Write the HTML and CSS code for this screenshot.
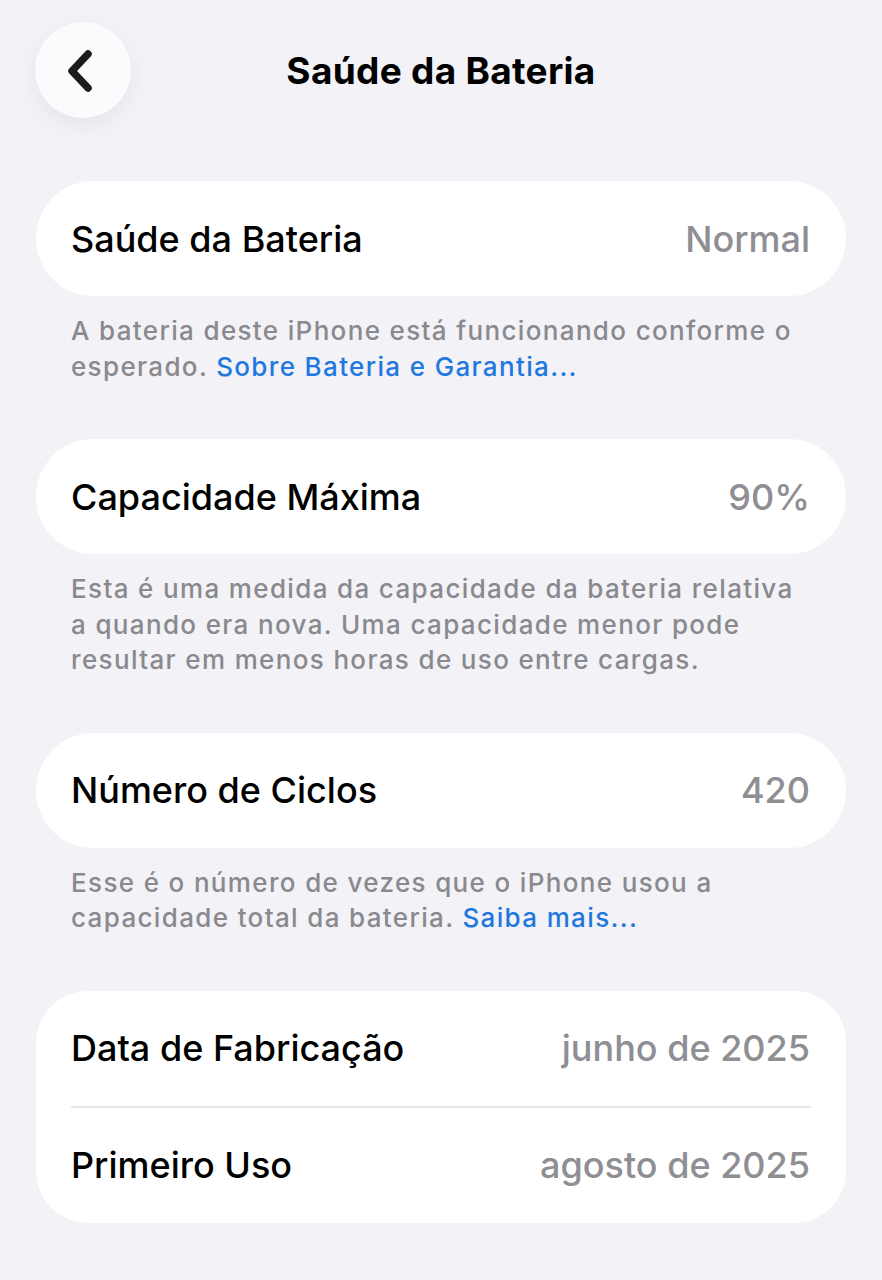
FILE: index.html
```html
<!DOCTYPE html>
<html lang="pt-BR">
<head>
<meta charset="utf-8">
<title>Saúde da Bateria</title>
<link rel="stylesheet" href="styles.css">
</head>
<body>
<div class="screen">
  <header class="nav">
    <button class="back" aria-label="Voltar">
      <svg width="40" height="48" viewBox="0 0 40 48"><path d="M28 8 L12 25 L28 42" fill="none" stroke="#1c1c1e" stroke-width="7.5" stroke-linecap="round" stroke-linejoin="round"/></svg>
    </button>
    <h1 class="title">Saúde da Bateria</h1>
  </header>

  <section class="group">
    <div class="card">
      <div class="row"><span class="label">Saúde da Bateria</span><span class="value">Normal</span></div>
    </div>
    <p class="footer">A bateria deste iPhone está funcionando conforme o esperado. <a class="link">Sobre Bateria e Garantia...</a></p>
  </section>

  <section class="group">
    <div class="card">
      <div class="row"><span class="label">Capacidade Máxima</span><span class="value">90%</span></div>
    </div>
    <p class="footer">Esta é uma medida da capacidade da bateria relativa a quando era nova. Uma capacidade menor pode resultar em menos horas de uso entre cargas.</p>
  </section>

  <section class="group">
    <div class="card">
      <div class="row"><span class="label">Número de Ciclos</span><span class="value">420</span></div>
    </div>
    <p class="footer">Esse é o número de vezes que o iPhone usou a capacidade total da bateria. <a class="link">Saiba mais...</a></p>
  </section>

  <section class="group">
    <div class="card card-multi">
      <div class="row"><span class="label">Data de Fabricação</span><span class="value">junho de 2025</span></div>
      <div class="divider"></div>
      <div class="row"><span class="label">Primeiro Uso</span><span class="value">agosto de 2025</span></div>
    </div>
  </section>
</div>
</body>
</html>
```
FILE: styles.css
```css
html, body {
  margin: 0;
  padding: 0;
  background: #f2f2f7;
}
body {
  font-family: Inter, "Liberation Sans", Arial, sans-serif;
  color: #000;
  -webkit-font-smoothing: antialiased;
}
.screen {
  width: 882px;
  min-height: 1280px;
  box-sizing: border-box;
  padding-top: 22px;
}
.nav {
  display: flex;
  align-items: center;
  height: 96px;
  padding-left: 35px;
}
.back {
  width: 96px;
  height: 96px;
  border-radius: 50%;
  border: none;
  background: #fbfbfd;
  box-shadow: 0 8px 24px rgba(0, 0, 0, 0.06);
  display: flex;
  align-items: center;
  justify-content: center;
  padding: 0 6px 0 0;
  flex: none;
}
.title {
  flex: 1;
  margin: 0;
  padding-right: 131px;
  text-align: center;
  font-size: 37px;
  font-weight: 700;
  letter-spacing: 0.3px;
}
.group {
  margin: 63px 36px 0 36px;
}
.group + .group {
  margin-top: 55px;
}
.card {
  background: #fff;
  border-radius: 57px;
}
.card-multi {
  border-radius: 52px;
}
.row {
  display: flex;
  justify-content: space-between;
  align-items: center;
  height: 115px;
  padding: 0 36px 0 35px;
}
.label {
  font-size: 36px;
  font-weight: 500;
  letter-spacing: 0;
}
.value {
  font-size: 36px;
  font-weight: 500;
  color: #8e8e93;
  letter-spacing: 0;
}
.divider {
  height: 2px;
  background: #e5e5ea;
  margin: 0 35px;
}
.footer {
  margin: 0;
  padding: 17px 36px 0 35px;
  font-size: 26px;
  line-height: 35.5px;
  letter-spacing: 1.35px;
  color: #89898e;
  font-weight: 500;
}
.link {
  color: #1f78e0;
}
```
